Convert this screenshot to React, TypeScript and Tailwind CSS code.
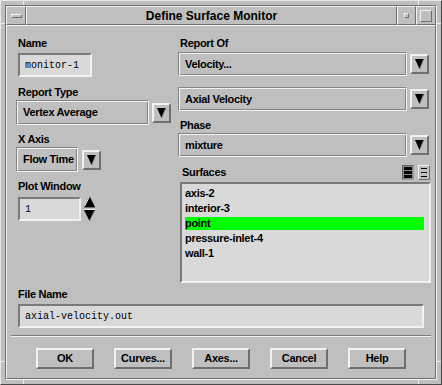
import React from "react";

const raised = "border-t-[#f2f2f2] border-l-[#f2f2f2] border-b-[#6f6f6f] border-r-[#6f6f6f]";

function Label({ children, className = "" }: { children: React.ReactNode; className?: string }) {
  return <div className={`h-[14px] leading-[14px] text-[11px] font-bold tracking-[-0.3px] ${className}`}>{children}</div>;
}

function ArrowButton() {
  return (
    <div className="w-[19px] h-[20px] shrink-0 border-2 border-t-[#f2f2f2] border-l-[#f2f2f2] border-b-[#6f6f6f] border-r-[#6f6f6f] flex items-center justify-center">
      <svg width="9" height="10" viewBox="0 0 9 10">
        <polygon points="0,0 9,0 4.5,10" fill="#000" />
        <line x1="8.5" y1="0.5" x2="5" y2="9.5" stroke="#8a8a8a" strokeWidth="1" />
      </svg>
    </div>
  );
}

function OptionMenu({ label, width, height = 24, gap = 3 }: { label: string; width: number; height?: number; gap?: number }) {
  return (
    <div className="flex items-center" style={{ gap }}>
      <div
        className="flex items-center pl-[6px] text-[11px] font-bold tracking-[-0.3px] whitespace-nowrap border border-t-[#858585] border-l-[#858585] border-b-[#f2f2f2] border-r-[#f2f2f2] shadow-[inset_1px_1px_0_#f2f2f2,inset_-1px_-1px_0_#858585]"
        style={{ width, height }}
      >
        {label}
      </div>
      <ArrowButton />
    </div>
  );
}

function TextField({ value, width }: { value: string; width: number }) {
  return (
    <div
      className="h-[24px] bg-[#d9d9d9] border-2 border-t-[#7a7a7a] border-l-[#7a7a7a] border-b-[#f2f2f2] border-r-[#f2f2f2] flex items-center pl-[5px] text-[10px] [font-family:'Liberation_Mono','DejaVu_Sans_Mono',monospace]"
      style={{ width }}
    >
      {value}
    </div>
  );
}

function PushButton({ children }: { children: React.ReactNode }) {
  return (
    <div className={`w-[58px] h-[21px] border-2 ${raised} flex items-center justify-center text-[11px] font-bold tracking-[-0.3px]`}>
      {children}
    </div>
  );
}

const surfaces = ["axis-2", "interior-3", "point", "pressure-inlet-4", "wall-1"];

export default function App() {
  return (
    <div className="w-[442px] h-[385px] bg-[#bfbfbf] text-black flex flex-col border border-t-[#e8e8e8] border-l-[#e8e8e8] border-b-[#4a4a4a] border-r-[#4a4a4a] [font-family:'Liberation_Sans',Arial,sans-serif] overflow-hidden">
      {/* top frame */}
      <div className="h-[4px] flex">
        <div className="w-[23px] border-r border-r-[#f0f0f0]" />
        <div className="flex-1" />
        <div className="w-[23px] border-l border-l-[#f0f0f0]" />
      </div>

      <div className="flex-1 flex">
        {/* left frame */}
        <div className="w-[4px] flex flex-col">
          <div className="h-[19px] border-b border-b-[#f0f0f0]" />
          <div className="flex-1" />
          <div className="h-[19px] border-t border-t-[#f0f0f0]" />
        </div>

        <div className="flex-1 flex flex-col border border-t-[#6f6f6f] border-l-[#6f6f6f] border-b-[#f0f0f0] border-r-[#f0f0f0]">
          {/* title bar */}
          <div className="h-[19px] flex">
            <div className={`w-[20px] border ${raised} flex items-center justify-center`}>
              <div className={`w-[11px] h-[4px] border ${raised}`} />
            </div>
            <div className={`flex-1 border ${raised} flex items-center justify-center text-[12px] font-bold`}>
              Define Surface Monitor
            </div>
            <div className={`w-[19px] border ${raised} flex items-center justify-center`}>
              <div className={`w-[5px] h-[5px] border ${raised}`} />
            </div>
            <div className={`w-[20px] border ${raised} flex items-center justify-center`}>
              <div className={`w-[12px] h-[12px] border ${raised}`} />
            </div>
          </div>

          {/* client area */}
          <div className={`flex-1 border ${raised} pt-[10px] flex flex-col`}>
            <div className="flex pl-[9px] gap-[7px]">
              {/* left column */}
              <div className="w-[155px] flex flex-col">
                <Label className="pl-[2px]">Name</Label>
                <div className="mt-[3px] ml-[2px]">
                  <TextField value="monitor-1" width={74} />
                </div>
                <Label className="mt-[8px] pl-[2px]">Report Type</Label>
                <div className="mt-[1px]">
                  <OptionMenu label="Vertex Average" width={134} height={25} />
                </div>
                <Label className="mt-[7px] pl-[2px]">X Axis</Label>
                <div className="mt-[1px]">
                  <OptionMenu label="Flow Time" width={62} height={25} gap={4} />
                </div>
                <Label className="mt-[7px] pl-[2px]">Plot Window</Label>
                <div className="mt-[3px] ml-[2px] flex items-center gap-[2px]">
                  <TextField value="1" width={63} />
                  <svg width="13" height="26" viewBox="0 0 13 26">
                    <polygon points="6.5,0 12,11 1,11" fill="#000" />
                    <line x1="6.5" y1="0.5" x2="1.5" y2="10.5" stroke="#e8e8e8" />
                    <line x1="1" y1="11.5" x2="12" y2="11.5" stroke="#707070" />
                    <polygon points="1,14 12,14 6.5,25" fill="#000" />
                    <line x1="1" y1="13.5" x2="12" y2="13.5" stroke="#e8e8e8" />
                    <line x1="11.5" y1="14.5" x2="6.5" y2="24.5" stroke="#707070" />
                  </svg>
                </div>
              </div>

              {/* right column */}
              <div className="w-[254px] flex flex-col">
                <Label className="pl-[2px]">Report Of</Label>
                <div className="mt-[2px]">
                  <OptionMenu label="Velocity..." width={229} />
                </div>
                <div className="mt-[11px]">
                  <OptionMenu label="Axial Velocity" width={229} />
                </div>
                <Label className="mt-[7px] pl-[2px]">Phase</Label>
                <div className="mt-[1px]">
                  <OptionMenu label="mixture" width={229} />
                </div>
                <div className="mt-[6px] h-[18px] flex items-center w-[252px]">
                  <div className="flex-1 pl-[4px] text-[11px] font-bold tracking-[-0.3px]">Surfaces</div>
                  <div className="flex gap-[4px]">
                    <div className="w-[12px] h-[15px] border border-t-[#606060] border-l-[#606060] border-b-[#9a9a9a] border-r-[#9a9a9a] bg-[#8a8a8a] flex flex-col justify-center gap-[1px] px-[1px]">
                      <div className="h-[3px] bg-black" />
                      <div className="h-[3px] bg-black" />
                      <div className="h-[3px] bg-black" />
                    </div>
                    <div className={`w-[12px] h-[15px] border ${raised} flex flex-col justify-center gap-[3px] px-[2px]`}>
                      <div className="h-px bg-black" />
                      <div className="h-px bg-black" />
                      <div className="h-px bg-black" />
                    </div>
                  </div>
                </div>
                <div className="mt-[1px] ml-[2px] w-[251px] h-[101px] bg-[#d9d9d9] border-2 border-t-[#7a7a7a] border-l-[#7a7a7a] border-b-[#f2f2f2] border-r-[#f2f2f2] pt-[3px] pl-[3px] pr-[5px] flex flex-col gap-[2px]">
                  {surfaces.map((s) => (
                    <div
                      key={s}
                      className={`h-[13px] leading-[13px] text-[11px] font-bold tracking-[-0.3px] ${s === "point" ? "bg-[#00ff00]" : ""}`}
                    >
                      {s}
                    </div>
                  ))}
                </div>
              </div>
            </div>

            {/* file name */}
            <div className="pl-[11px] mt-[4px]">
              <Label>File Name</Label>
              <div className="mt-[3px]">
                <TextField value="axial-velocity.out" width={406} />
              </div>
            </div>

            <div className="mt-[7px] mx-[4px] h-[2px] border-t border-t-[#7a7a7a] border-b border-b-[#f2f2f2]" />

            <div className="mt-[11px] flex justify-center gap-[20px]">
              <PushButton>OK</PushButton>
              <PushButton>Curves...</PushButton>
              <PushButton>Axes...</PushButton>
              <PushButton>Cancel</PushButton>
              <PushButton>Help</PushButton>
            </div>
          </div>
        </div>

        {/* right frame */}
        <div className="w-[4px] flex flex-col">
          <div className="h-[19px] border-b border-b-[#f0f0f0]" />
          <div className="flex-1" />
          <div className="h-[19px] border-t border-t-[#f0f0f0]" />
        </div>
      </div>

      {/* bottom frame */}
      <div className="h-[4px] flex">
        <div className="w-[23px] border-r border-r-[#f0f0f0]" />
        <div className="flex-1" />
        <div className="w-[23px] border-l border-l-[#f0f0f0]" />
      </div>
    </div>
  );
}
